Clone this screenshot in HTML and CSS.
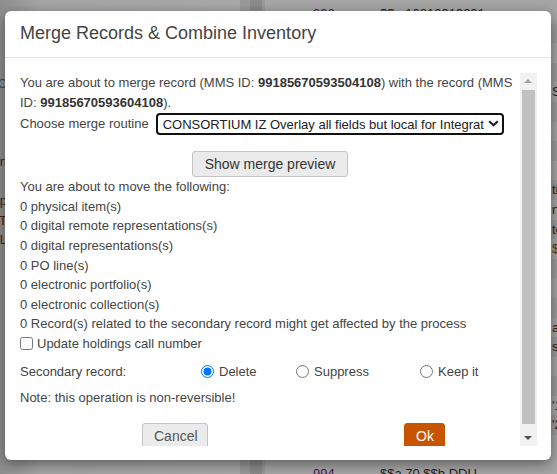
FILE: index.html
```html
<!DOCTYPE html>
<html lang="en">
<head>
  <meta charset="UTF-8">
  <meta name="viewport" content="width=device-width,initial-scale=1">
  <title>Merge Records &amp; Combine Inventory</title>
  <link rel="stylesheet" href="styles.css">
</head>
<body>

  <!-- page behind the dialog (dimmed) -->
  <div class="page">
    <div class="side">
      <div class="frag frag-link"><span>ABC</span></div>
      <div class="frag"></div>
      <div class="frag"></div>
      <div class="frag"></div>
      <div class="frag"><span>Edition</span></div>
      <div class="frag"></div>
      <div class="frag"><span>Group</span></div>
      <div class="frag frag-red"><span>CT</span></div>
      <div class="frag frag-red"><span>EL</span></div>
    </div>
    <div class="gutter"><span></span></div>
    <div class="records">
      <div class="rec"><span class="tag">996</span><span>$$a 10810919391</span><span></span></div>
      <div class="rec"><span></span><span></span><span></span></div>
      <div class="rec"><span></span><span></span><span></span></div>
      <div class="rec"><span></span><span></span><span></span></div>
      <div class="rec"><span></span><span></span><span>Source</span></div>
      <div class="rec"><span></span><span></span><span></span></div>
      <div class="rec"><span></span><span></span><span></span></div>
      <div class="rec"><span></span><span></span><span></span></div>
      <div class="rec"><span></span><span></span><span></span></div>
      <div class="rec"><span></span><span></span><span>title</span></div>
      <div class="rec"><span></span><span></span><span>nr</span></div>
      <div class="rec"><span></span><span></span><span>te</span></div>
      <div class="rec"><span></span><span></span><span class="amount">$</span></div>
      <div class="rec"><span></span><span></span><span></span></div>
      <div class="rec"><span></span><span></span><span></span></div>
      <div class="rec"><span></span><span></span><span></span></div>
      <div class="rec"><span></span><span></span><span>a</span></div>
      <div class="rec"><span></span><span></span><span>si</span></div>
      <div class="rec"><span></span><span></span><span></span></div>
      <div class="rec"><span></span><span></span><span></span></div>
      <div class="rec"><span></span><span></span><span>'1</span></div>
      <div class="rec"><span></span><span></span><span>'2</span></div>
      <div class="rec rec-last"><span class="tag">994</span><span>$$a 70 $$b DDU</span><span></span></div>
    </div>
  </div>

  <div class="modal" role="dialog" aria-labelledby="merge-title">
    <div class="modal-header">
      <h4 id="merge-title">Merge Records &amp; Combine Inventory</h4>
    </div>

    <div class="modal-body">
      <div class="scroll">
        <p>You are about to merge record (MMS ID: <b>99185670593504108</b>) with the record (MMS ID: <b>99185670593604108</b>).</p>

        <div class="routine">
          <label for="routine">Choose merge routine</label>
          <div class="select-wrap">
            <select id="routine">
              <option>CONSORTIUM IZ Overlay all fields but local for Integrations</option>
            </select>
            <svg class="chevron" width="11" height="7" viewBox="0 0 11 7" aria-hidden="true">
              <path d="M1.2 1.2 L5.5 5.3 L9.8 1.2" fill="none" stroke="#222" stroke-width="2.2"/>
            </svg>
          </div>
        </div>

        <div class="preview">
          <button class="btn">Show merge preview</button>
        </div>

        <p>You are about to move the following:</p>
        <ul class="moves">
          <li>0 physical item(s)</li>
          <li>0 digital remote representations(s)</li>
          <li>0 digital representations(s)</li>
          <li>0 PO line(s)</li>
          <li>0 electronic portfolio(s)</li>
          <li>0 electronic collection(s)</li>
          <li>0 Record(s) related to the secondary record might get affected by the process</li>
        </ul>

        <label class="check">
          <input type="checkbox">
          Update holdings call number
        </label>

        <div class="secondary">
          <span>Secondary record:</span>
          <label><input type="radio" name="secondary" checked> Delete</label>
          <label><input type="radio" name="secondary"> Suppress</label>
          <label><input type="radio" name="secondary"> Keep it</label>
        </div>

        <p>Note: this operation is non-reversible!</p>

        <div class="actions">
          <button class="btn btn-cancel">Cancel</button>
          <button class="btn btn-ok">Ok</button>
        </div>
      </div>

      <div class="scrollbar" aria-hidden="true">
        <span class="arrow arrow-up"></span>
        <span class="thumb"></span>
        <span class="arrow arrow-down"></span>
      </div>
    </div>
  </div>

</body>
</html>
```

FILE: styles.css
```css
:root {
  --text:     #444;
  --strong:   #333;
  --line:     #e5e5e5;
  --ok:       #c85400;
  --btn-bg:   #ebebeb;
  --btn-bd:   #c4c4c4;
  --page:     #a3a3a3;
}
*, *::before, *::after { box-sizing: border-box; }
body {
  margin: 0;
  height: 474px;
  overflow: hidden;
  font-family: 'Liberation Sans', Arial, sans-serif;
  font-size: 13px;
  background: var(--page);
  color: var(--text);
}

/* dimmed page behind the dialog */
.page {
  display: flex;
  height: 474px;
  overflow: hidden;
}
.side {
  flex: 0 0 240px;
  padding-top: 74px;
  background: linear-gradient(90deg, #8f8f8f, #a5a5a5 40px, #a9a9a9);
}
.frag {
  display: flex;
  justify-content: flex-end;   /* overflow goes to the left */
  width: 7px;
  height: 19.5px;
  line-height: 19.5px;
  white-space: nowrap;
  color: #2e2e2e;
}
.frag-link { color: #2f4f78; }
.frag-red  { color: #5a1717; }
.gutter {
  flex: 0 0 25px;
  display: flex;
  padding-left: 10px;
  background: #9a9a9a;
}
.gutter span { width: 12px; background: #8b8b8b; }
.records {
  flex: 1;
  min-width: 0;
  display: flex;
  flex-direction: column;
  padding-top: 4px;
  overflow: hidden;
  background: #a6a6a6;
}
.rec {
  display: grid;
  grid-template-columns: 67px 172px auto;
  flex-shrink: 0;
  height: 19.6px;
  line-height: 19.6px;
  padding-left: 48px;
  white-space: nowrap;
  color: #1f1f1f;
}
.rec:nth-child(even) { background: #9d9d9d; }
.rec .tag { color: #4a1d55; }
.rec .amount { color: #5a3a00; }
.rec-last { margin-top: auto; margin-bottom: -9.6px; }

/* dialog */
.modal {
  position: absolute;
  left: 5px; top: 11px;
  width: 546px; height: 449px;
  background: #fff;
  border-radius: 6px;
  box-shadow: 0 4px 14px rgba(0,0,0,.45);
}
.modal-header {
  height: 47px;
  padding: 12px 15px 0;
  border-bottom: 1px solid var(--line);
}
.modal-header h4 {
  margin: 0;
  font-size: 18px;
  font-weight: 400;
  line-height: 20px;
  color: var(--text);
}
.modal-body {
  display: flex;
  padding: 15px 14px 0 15px;
}
.scroll {
  width: 500px;
  height: 373px;
  overflow: hidden;
  line-height: 19.6px;
}
.scroll p { margin: 0; }
.scroll b { color: var(--strong); }

.routine {
  display: flex;
  align-items: center;
  gap: 7px;
  height: 24px;
}
.select-wrap { position: relative; }
.select-wrap select {
  display: block;
  width: 348px;
  height: 22px;
  padding: 0 18px 0 5px;
  border: 2px solid #111;
  border-radius: 4px;
  background: #fff;
  font: inherit;
  color: #222;
  appearance: none;
  -webkit-appearance: none;
}
.select-wrap .chevron {
  position: absolute;
  right: 5px; top: 7px;
  pointer-events: none;
}

.preview {
  display: flex;
  justify-content: center;
  margin-top: 15px;
}
.btn {
  height: 26px;
  padding: 0 11px;
  border: 1px solid var(--btn-bd);
  border-radius: 3px;
  background: var(--btn-bg);
  font-family: inherit;
  font-size: 14px;
  color: var(--strong);
  cursor: pointer;
}
.preview .btn { padding: 0 12px; }

.moves { margin: 0; padding: 0; list-style: none; }

.check { display: flex; align-items: center; }
.check input { width: 13px; height: 13px; margin: 0 4px 0 0; }

.secondary {
  display: grid;
  grid-template-columns: 181px 95px 124px 1fr;
  align-items: center;
  padding: 8px 0 7px;
}
.secondary label { display: flex; align-items: center; }
.secondary input { width: 13px; height: 13px; margin: 0 5px 0 0; accent-color: #0075ff; }

.actions {
  display: flex;
  margin-top: 15px;
}
.btn-cancel { margin-left: 122px; width: 66px; color: #555; }
.btn-ok {
  margin-left: 196px;
  width: 41px;
  border-color: var(--ok);
  background: var(--ok);
  color: #fff;
}

/* fake classic scrollbar */
.scrollbar {
  display: flex;
  flex-direction: column;
  width: 17px;
  height: 373px;
  background: #f1f1f1;
}
.arrow {
  position: relative;
  height: 17px;
}
.arrow::after {
  content: '';
  position: absolute;
  left: 4px;
  border-left: 4px solid transparent;
  border-right: 4px solid transparent;
}
.arrow-up::after   { top: 6px; border-bottom: 4px solid #a3a3a3; }
.arrow-down::after { top: 7px; border-top: 4px solid #505050; }
.thumb {
  flex: 1;
  margin: 0 2px 5px;
  background: #c1c1c1;
}
```
